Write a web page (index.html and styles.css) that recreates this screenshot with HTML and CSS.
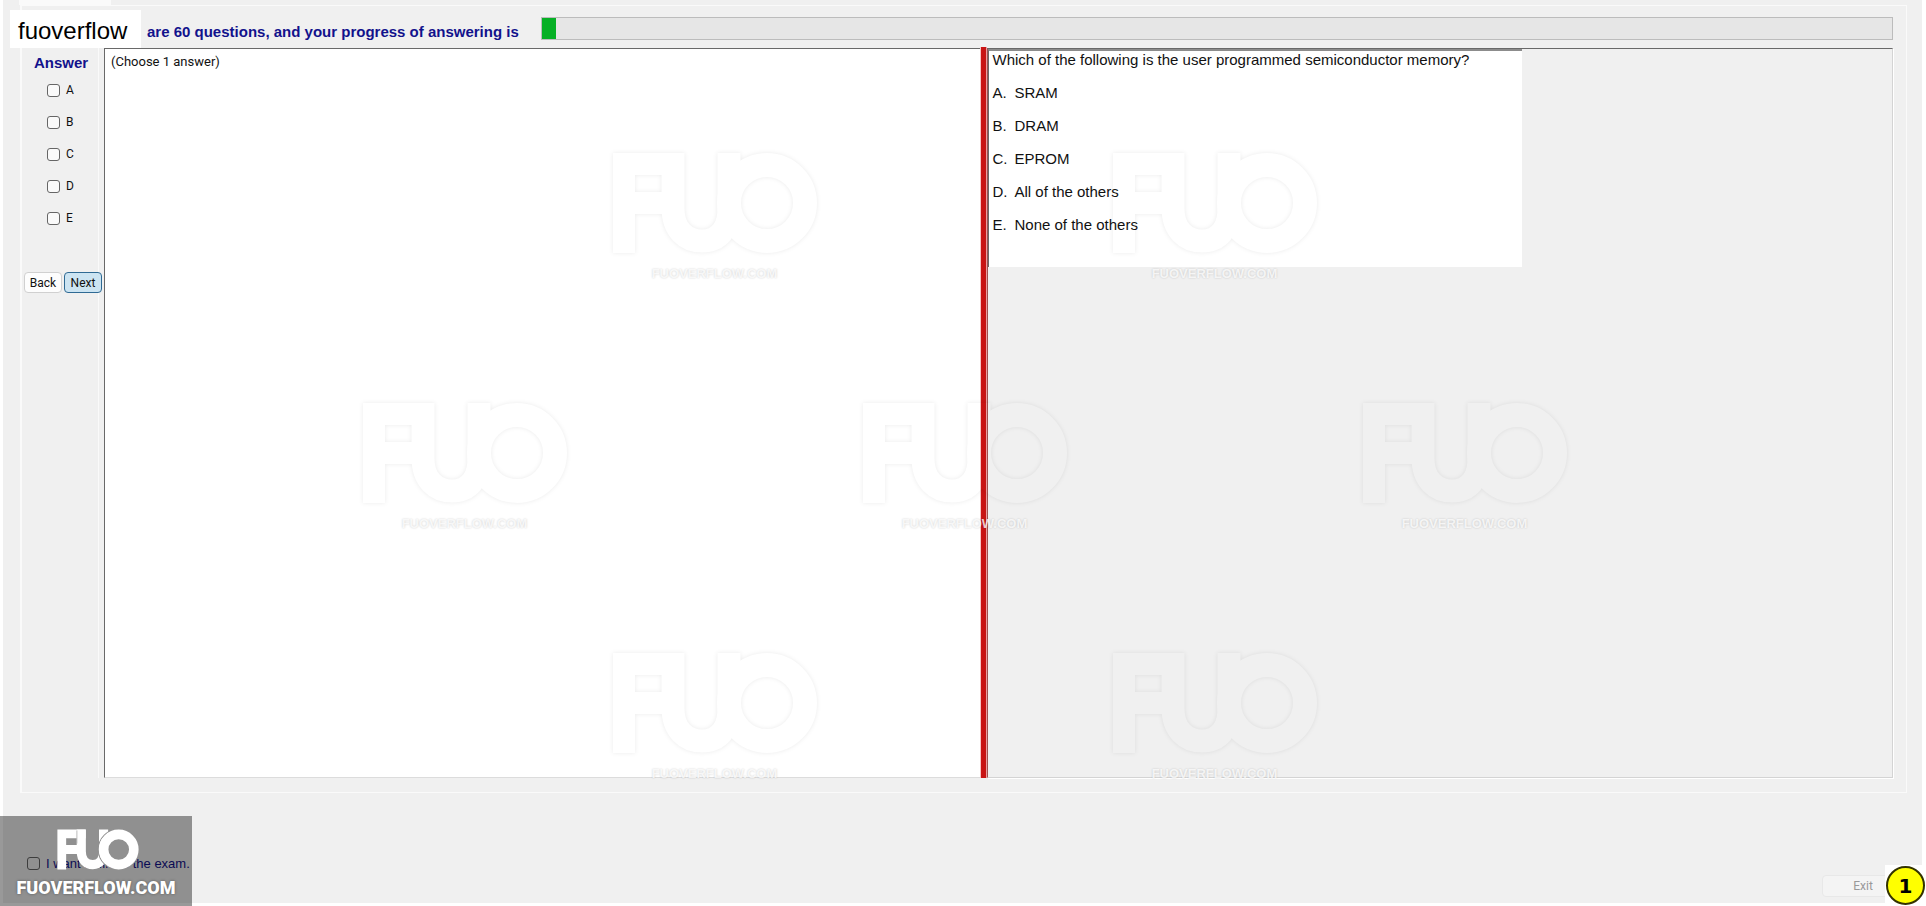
FILE: index.html
```html
<!DOCTYPE html>
<html lang="en">
<head>
    <meta charset="UTF-8">
    <meta name="viewport" content="width=device-width, initial-scale=1.0">
    <title>fuoverflow</title>

    <link rel="stylesheet" href="styles.css">
</head>
<body>

    <svg class="defs" aria-hidden="true">
        <defs>
            <filter id="outline" x="-10%" y="-10%" width="120%" height="120%">
                <feGaussianBlur in="SourceAlpha" stdDeviation="2" result="blur"/>
                <feFlood flood-color="#000" flood-opacity="0.08"/>
                <feComposite in2="blur" operator="in"/>
                <feComposite in2="SourceAlpha" operator="out"/>
            </filter>
            <symbol id="logo" viewBox="0 0 206 102">
                <path d="M1 1H72V23H23V40H52V62H23V101H1Z" fill="currentColor"/>
                <path d="M61 1V56C61 78 74 89 90 89C107 89 117 77 117 56V1" fill="none" stroke="currentColor" stroke-width="23"/>
                <circle cx="155" cy="51" r="38" fill="none" stroke="currentColor" stroke-width="24"/>
            </symbol>
        </defs>
    </svg>

    <div class="window">
        <div class="tab"></div>

        <main class="exam">
            <header>
                <div class="label">fuoverflow</div>
                <div class="status">are 60 questions, and your progress of answering is</div>
                <div class="progress" role="progressbar" aria-valuenow="1" aria-valuemax="100"><div class="bar"></div></div>
            </header>

            <div class="workspace">
                <aside>
                    <h2>Answer</h2>
                    <div class="choices">
                        <label><input type="checkbox">A</label>
                        <label><input type="checkbox">B</label>
                        <label><input type="checkbox">C</label>
                        <label><input type="checkbox">D</label>
                        <label><input type="checkbox">E</label>
                    </div>
                    <div class="nav">
                        <button>Back</button>
                        <button class="next">Next</button>
                    </div>
                </aside>

                <section class="hint">(Choose 1 answer)</section>
                <div class="splitter"></div>
                <section class="viewer">
                    <div class="question">
                        <p>Which of the following is the user programmed semiconductor memory?</p>
                        <p><span>A.</span>SRAM</p>
                        <p><span>B.</span>DRAM</p>
                        <p><span>C.</span>EPROM</p>
                        <p><span>D.</span>All of the others</p>
                        <p><span>E.</span>None of the others</p>
                    </div>
                </section>
            </div>
        </main>

        <footer>
            <label class="finish"><input type="checkbox">I want to finish the exam.</label>
            <button class="exit" disabled>Exit</button>
        </footer>
    </div>

    <div class="watermarks" aria-hidden="true">
        <div class="row">
            <div class="mark"><svg><use href="#logo"/></svg>FUOVERFLOW.COM</div>
            <div class="mark"><svg><use href="#logo"/></svg>FUOVERFLOW.COM</div>
        </div>
        <div class="row">
            <div class="mark"><svg><use href="#logo"/></svg>FUOVERFLOW.COM</div>
            <div class="mark"><svg><use href="#logo"/></svg>FUOVERFLOW.COM</div>
            <div class="mark"><svg><use href="#logo"/></svg>FUOVERFLOW.COM</div>
        </div>
        <div class="row">
            <div class="mark"><svg><use href="#logo"/></svg>FUOVERFLOW.COM</div>
            <div class="mark"><svg><use href="#logo"/></svg>FUOVERFLOW.COM</div>
        </div>
    </div>

    <div class="brand">
        <svg viewBox="0 0 206 102">
            <path d="M1 1H72V23H23V40H52V62H23V101H1Z" fill="#fff"/>
            <path d="M61 1V56C61 78 74 89 90 89C107 89 117 77 117 56V1" fill="none" stroke="#fff" stroke-width="23"/>
            <circle cx="155" cy="51" r="51" fill="none" stroke="#919191" stroke-width="3"/>
            <path d="M50 3V36" stroke="#aaa" stroke-width="2"/>
            <circle cx="155" cy="51" r="38" fill="none" stroke="#fff" stroke-width="24"/>
        </svg>
        <div class="brandName">FUOVERFLOW.COM</div>
    </div>

    <div class="number"><span>1</span></div>

</body>
</html>
```

FILE: styles.css
```css
body {
    font-family: "Liberation Sans", Arial, sans-serif;
    margin: 0;
    background-color: white;
    color: #111;
    overflow: hidden;
}

.defs {
    position: absolute;
    width: 0;
    height: 0;
}

.window {
    display: flex;
    flex-direction: column;
    box-sizing: border-box;
    min-height: calc(100vh - 3px);
    margin: 0 4px 3px 3px;
    background-color: #f0f0f0;
}

.tab {
    width: 92px;
    height: 5px;
    margin-left: 16px;
    background-color: #fafafa;
}

.exam {
    flex: 1;
    display: flex;
    flex-direction: column;
    margin: 0 15px 0 17px;
    padding-right: 13px;
    padding-bottom: 14px;
    border: 1px solid #fafafa;
    border-left-width: 2px;
}

header {
    display: flex;
    align-items: flex-start;
    height: 42px;
}

.label {
    width: 131px;
    height: 38px;
    margin: 4px 0 0 -12px;
    background-color: white;
    color: black;
    font-size: 24px;
    line-height: 42px;
    text-indent: 8px;
}

.status {
    width: 394px;
    margin: 17px 0 0 6px;
    color: #12128c;
    font-size: 15px;
    font-weight: bold;
    line-height: 18px;
    white-space: nowrap;
}

.progress {
    flex: 1;
    height: 21px;
    margin-top: 11px;
    border: 1px solid #bcbcbc;
    background-color: #e6e6e6;
}

.bar {
    width: 1%;
    height: 21px;
    background-color: #06b025;
}

.workspace {
    flex: 1;
    display: grid;
    grid-template-columns: 82px 876fr 7px 905fr;
}

aside {
    margin-right: 5px;
    border-right: 1px solid #fafafa;
}

h2 {
    margin: 6px 0 10px;
    padding-left: 12px;
    color: #12128c;
    font-size: 15px;
    line-height: 18px;
}

.choices label {
    display: flex;
    align-items: center;
    gap: 6px;
    height: 16px;
    margin-bottom: 16px;
    padding-left: 25px;
    font-family: Roboto, sans-serif;
    font-size: 12px;
}

input {
    appearance: none;
    width: 13px;
    height: 13px;
    margin: 0;
    box-sizing: border-box;
    border: 1px solid #666;
    border-radius: 3px;
    background-color: #fafafa;
}

.nav {
    display: flex;
    gap: 2px;
    margin-top: 46px;
    padding-left: 2px;
}

button {
    flex: none;
    box-sizing: border-box;
    width: 38px;
    height: 21px;
    padding: 0;
    border: 1px solid #d0d0d0;
    border-radius: 4px;
    background-color: #fdfdfd;
    color: #111;
    font-family: Roboto, sans-serif;
    font-size: 12px;
}

.next {
    border-color: #2f6a94;
    background-color: #cce4f2;
}

.hint {
    padding: 5px 6px;
    border-top: 1px solid #696969;
    border-left: 1px solid #696969;
    border-bottom: 1px solid #dcdcdc;
    background-color: white;
    font-family: Roboto, sans-serif;
    font-size: 13px;
    line-height: 16px;
}

.splitter {
    margin-top: -1px;
    border-left: 1px solid #f8c4c4;
    border-right: 1px solid #e8a0a0;
    background-color: #c81414;
}

.viewer {
    border-top: 1px solid #696969;
    border-left: 1px solid #a05050;
    border-right: 1px solid #d4d4d4;
    border-bottom: 1px solid #d4d4d4;
    box-shadow: 1px 1px white;
}

.question {
    box-sizing: border-box;
    width: 59%;
    height: 218px;
    padding: 0 3px;
    border-top: 2px solid #8c8c8c;
    border-left: 1px solid #696969;
    background-color: white;
}

.question p {
    margin: 0 0 15px;
    font-size: 15px;
    line-height: 18px;
    white-space: nowrap;
}

.question span {
    display: inline-block;
    width: 22px;
}

footer {
    display: flex;
    justify-content: space-between;
    height: 110px;
}

.finish {
    display: flex;
    align-items: center;
    gap: 6px;
    height: 20px;
    margin: 60px 0 0 24px;
    color: #12128c;
    font-size: 13px;
}

.finish input {
    background-color: transparent;
}

.exit {
    width: 82px;
    height: 22px;
    margin: 82px 18px 0 0;
    border-color: #e8e8e8;
    background-color: #f4f4f4;
    color: #999;
}

/* pale logos tiled over the whole page */
.watermarks {
    position: absolute;
    top: 152px;
    left: 3px;
    right: 0;
    pointer-events: none;
}

.row {
    display: flex;
    justify-content: center;
    gap: 294px;
    height: 250px;
}

.mark {
    width: 206px;
    color: rgba(255, 255, 255, 0.8);
    font-size: 13px;
    font-weight: bold;
    line-height: 16px;
    text-align: center;
    text-shadow: 0 0 2px rgba(0, 0, 0, 0.2);
}

.mark svg {
    display: block;
    width: 206px;
    height: 102px;
    margin-bottom: 12px;
    color: black;
    filter: url(#outline);
}

.brand {
    position: absolute;
    left: 0;
    bottom: 0;
    width: 192px;
    height: 90px;
    background-color: rgba(0, 0, 0, 0.4);
    color: white;
    text-align: center;
}

.brand svg {
    display: block;
    width: 82px;
    height: 41px;
    margin: 13px auto 6px 57px;
}

.brandName {
    font-family: Roboto, sans-serif;
    font-size: 18px;
    font-weight: 900;
    line-height: 24px;
    text-shadow: 0 0 3px rgba(0, 0, 0, 0.4);
}

.number {
    position: absolute;
    right: 0;
    bottom: 0;
    padding: 1px;
    background-color: white;
}

.number span {
    display: block;
    width: 35px;
    height: 35px;
    border: 2px solid #333300;
    border-radius: 50%;
    background-color: yellow;
    color: black;
    font-family: "DejaVu Sans", sans-serif;
    font-size: 20px;
    font-weight: bold;
    line-height: 36px;
    text-align: center;
}
```
